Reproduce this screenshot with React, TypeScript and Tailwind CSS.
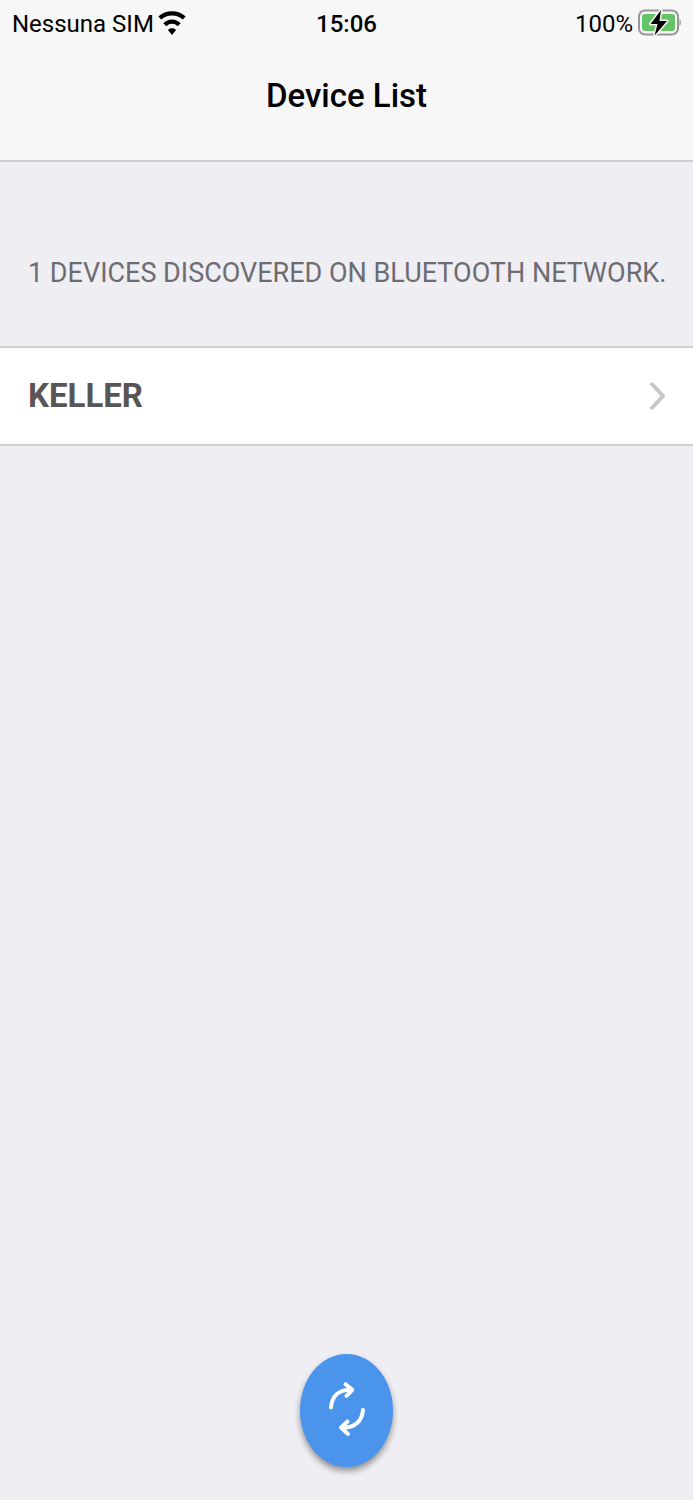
const devices = ["KELLER"];

function WifiIcon() {
  return (
    <svg viewBox="0 0 28 26" className="h-[26px] w-7" aria-hidden="true">
      <g fill="none" stroke="#000" strokeWidth="4.400">
        <path d="M1.800 7C8.500 0.800 19.500 0.800 26.200 7" />
        <path d="M6.800 13.800C10.900 9.600 17.100 9.600 21.200 13.800" />
      </g>
      <path d="M14 24L9.900 19C12.200 16.600 15.800 16.600 18.100 19Z" />
    </svg>
  );
}

function BatteryIcon() {
  return (
    <svg viewBox="0 0 44 30" className="h-[30px] w-11" aria-hidden="true">
      <rect x="2" y="1.500" width="39" height="24" rx="6" fill="#f7f7f7" stroke="#979797" strokeWidth="2" />
      <rect x="5" y="5" width="33" height="17" rx="3" fill="#65c466" />
      <path d="M42.500 10C44.300 11 44.300 16 42.500 17Z" fill="#979797" />
      <path
        d="M24 1L13.500 15H20.500L17.600 26.500L30 12H22.500Z"
        fill="#000"
        stroke="#f7f7f7"
        strokeWidth="3"
        strokeLinejoin="round"
        paintOrder="stroke"
      />
    </svg>
  );
}

function RefreshIcon() {
  return (
    <svg
      viewBox="0 0 38 56"
      className="h-14 w-[38px] overflow-visible"
      fill="none"
      stroke="#fff"
      strokeWidth="4"
      strokeLinecap="round"
      strokeLinejoin="round"
      aria-hidden="true"
    >
      <path d="M3 24.500C4 13 11 6.500 22 7" />
      <path d="M17.500 1.300L24.300 6.800L18.500 12.800" />
      <path d="M35 27C34 38 27 45 15 44.500" />
      <path d="M19.500 38.500L13 44.500L20 51" />
    </svg>
  );
}

export default function App() {
  return (
    <div className="flex min-h-screen flex-col bg-[#efeef3] font-['Roboto',sans-serif] text-black">
      <header className="border-b-2 border-[#cfced2] bg-[#f7f7f7] pb-10">
        <div className="grid grid-cols-3 items-center px-3 pt-2 text-[24px] leading-8">
          <div className="flex items-center gap-1 whitespace-nowrap">
            <span>Nessuna SIM</span>
            <WifiIcon />
          </div>
          <time className="text-center font-medium">15:06</time>
          <div className="flex items-center justify-end gap-1">
            <span>100%</span>
            <BatteryIcon />
          </div>
        </div>
        <h1 className="pt-8 text-center text-[33px] leading-12 font-medium">Device List</h1>
      </header>

      <main className="flex flex-1 flex-col">
        <h2 className="pt-[91px] pr-4 pb-[53px] pl-7 text-[27px] leading-10 text-[#6d6c72]">
          1 DEVICES DISCOVERED ON BLUETOOTH NETWORK.
        </h2>
        <ul className="border-y-2 border-[#d0cfd3] bg-white">
          {devices.map((name) => (
            <li key={name}>
              <button type="button" className="flex h-24 w-full items-center justify-between px-7 text-left">
                <span className="text-[33px] font-bold text-[#595555]">{name}</span>
                <svg viewBox="0 0 16 30" className="h-[30px] w-4" aria-hidden="true">
                  <path d="M2 2L14 15L2 28" fill="none" stroke="#c7c7cb" strokeWidth="3.800" />
                </svg>
              </button>
            </li>
          ))}
        </ul>
      </main>

      <footer className="flex justify-center pb-[33px]">
        <button
          type="button"
          aria-label="Refresh devices"
          className="flex h-[113px] w-[93px] items-center justify-center rounded-[50%] bg-[#4a94ec] shadow-[0_4px_6px_rgba(0,0,0,0.4)]"
        >
          <RefreshIcon />
        </button>
      </footer>
    </div>
  );
}
